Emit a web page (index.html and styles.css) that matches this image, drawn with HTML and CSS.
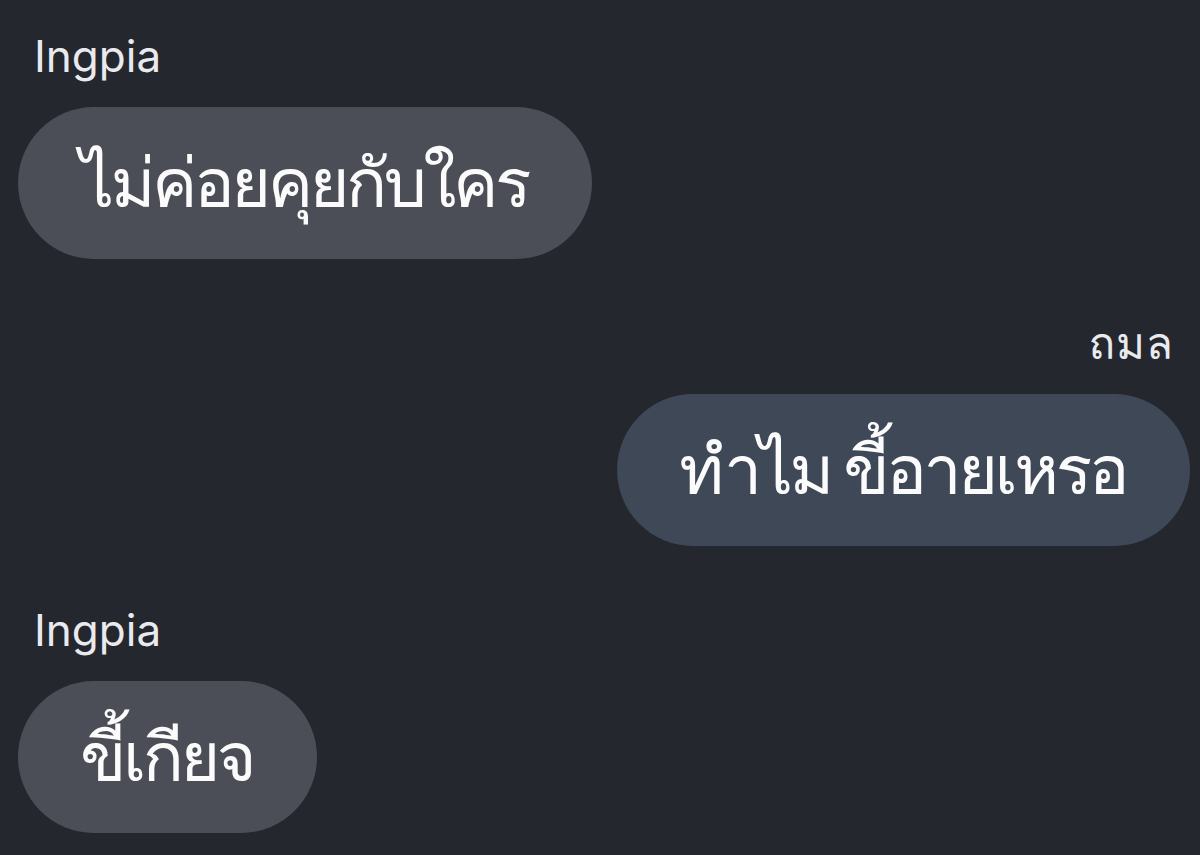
FILE: index.html
```html
<!DOCTYPE html>
<html lang="th">
<head>
<meta charset="utf-8">
<link rel="stylesheet" href="styles.css">
</head>
<body>
<div class="chat">
  <div class="msg left first">
    <div class="name">Ingpia</div>
    <div class="bubble gray">ไม่ค่อยคุยกับใคร</div>
  </div>
  <div class="msg right">
    <div class="name">ถมล</div>
    <div class="bubble blue">ทำไม ขี้อายเหรอ</div>
  </div>
  <div class="msg left">
    <div class="name">Ingpia</div>
    <div class="bubble gray">ขี้เกียจ</div>
  </div>
</div>
</body>
</html>
```
FILE: styles.css
```css
html, body {
  margin: 0;
  padding: 0;
  background: #24272e;
  height: 100%;
  overflow: hidden;
}
.chat {
  display: flex;
  flex-direction: column;
  padding: 28px 10px 0 18px;
  font-family: Inter, Loma, sans-serif;
  color: #f2f3f5;
}
.msg {
  display: flex;
  flex-direction: column;
  align-items: flex-start;
  margin-top: 56px;
}
.msg.first { margin-top: 0; }
.msg.right { align-items: flex-end; }
.name {
  font-size: 44px;
  line-height: 56px;
  color: #e9eaed;
  padding-left: 16px;
  margin-bottom: 23px;
}
.msg.right .name {
  padding-left: 0;
  padding-right: 16px;
  letter-spacing: 1px;
}
.bubble {
  font-family: Loma, sans-serif;
  font-size: 68px;
  letter-spacing: -3.5px;
  word-spacing: -7px;
  line-height: 76px;
  padding: 38px 64px 38px 62px;
  border-radius: 76px;
  color: #fbfbfc;
}
.gray { background: #4b4e56; }
.blue { background: #3f4857; }
```
